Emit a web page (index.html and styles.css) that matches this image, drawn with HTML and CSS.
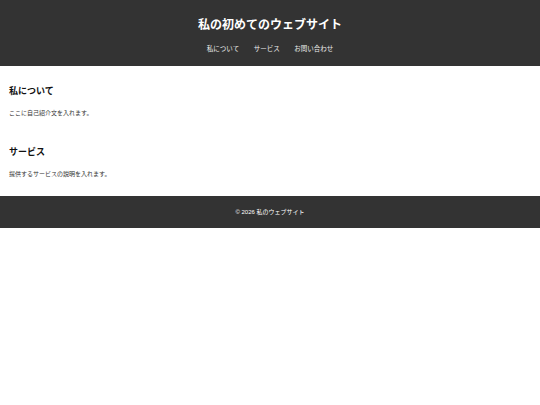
FILE: index.html
```html
<!DOCTYPE html>
<html lang="ja">
<head>
<meta charset="utf-8">
<title>私の初めてのウェブサイト</title>
<link rel="stylesheet" href="styles.css">
</head>
<body>
<header class="site-header">
  <h1 class="site-title">私の初めてのウェブサイト</h1>
  <nav class="site-nav">
    <ul class="nav-list">
      <li class="nav-item"><a class="nav-link" href="#about">私について</a></li>
      <li class="nav-item"><a class="nav-link" href="#services">サービス</a></li>
      <li class="nav-item"><a class="nav-link" href="#contact">お問い合わせ</a></li>
    </ul>
  </nav>
</header>
<main class="content">
  <section class="section" id="about">
    <h2 class="section-title">私について</h2>
    <p class="section-text">ここに自己紹介文を入れます。</p>
  </section>
  <section class="section" id="services">
    <h2 class="section-title">サービス</h2>
    <p class="section-text">提供するサービスの説明を入れます。</p>
  </section>
</main>
<footer class="site-footer">
  <p class="footer-text">© 2026 私のウェブサイト</p>
</footer>
</body>
</html>
```

FILE: styles.css
```css
html, body {
  margin: 0;
  padding: 0;
  background: #ffffff;
}
body {
  font-family: "Liberation Sans", "Noto Sans CJK JP", sans-serif;
  color: #222222;
}
.site-header {
  background: #333333;
  color: #ffffff;
  padding: 14px 0 13px;
  text-align: center;
}
.site-title {
  margin: 0;
  font-size: 12px;
  line-height: 22px;
  font-weight: bold;
}
.site-nav {
  margin-top: 9px;
}
.nav-list {
  list-style: none;
  margin: 0;
  padding: 0;
  display: flex;
  justify-content: center;
  gap: 14.5px;
}
.nav-link {
  color: #eeeeee;
  text-decoration: none;
  font-size: 6.5px;
  line-height: 8px;
  display: block;
}
.content {
  padding: 19px 9px 17px;
}
.section + .section {
  margin-top: 28px;
}
.section-title {
  margin: 0 0 12px;
  font-size: 9px;
  line-height: 12px;
  font-weight: bold;
  color: #111111;
}
.section-text {
  margin: 0;
  font-size: 6px;
  line-height: 9px;
  color: #333333;
}
.site-footer {
  background: #333333;
  color: #ffffff;
  text-align: center;
}
.footer-text {
  margin: 0;
  font-size: 6px;
  line-height: 32px;
}
```
